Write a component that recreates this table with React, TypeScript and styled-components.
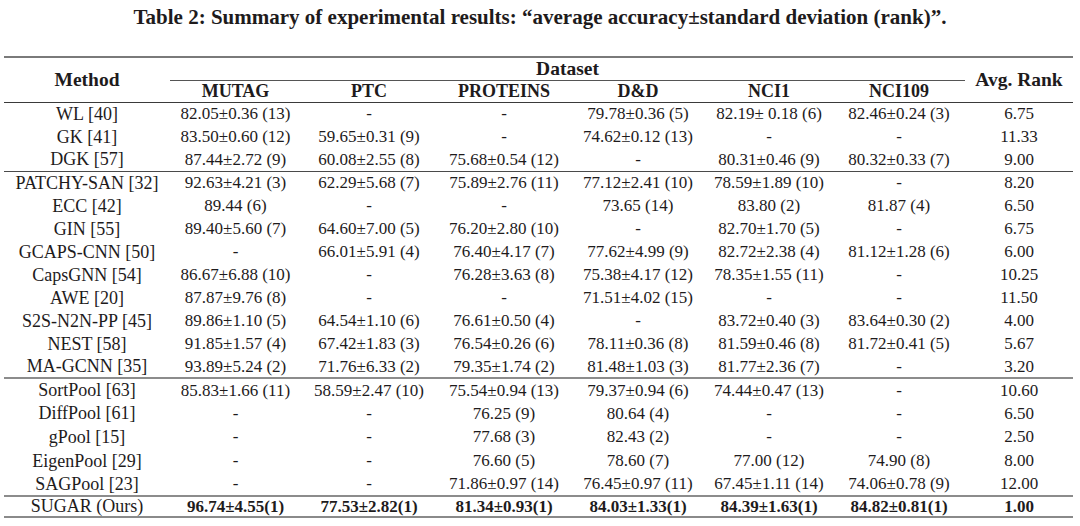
import { FC } from 'react'
import styled, { createGlobalStyle } from 'styled-components'

type Row = [string, string, string, string, string, string, string, string]

const groups: Row[][] = [
  [
    ['WL [40]', '82.05±0.36 (13)', '-', '-', '79.78±0.36 (5)', '82.19± 0.18 (6)', '82.46±0.24 (3)', '6.75'],
    ['GK [41]', '83.50±0.60 (12)', '59.65±0.31 (9)', '-', '74.62±0.12 (13)', '-', '-', '11.33'],
    ['DGK [57]', '87.44±2.72 (9)', '60.08±2.55 (8)', '75.68±0.54 (12)', '-', '80.31±0.46 (9)', '80.32±0.33 (7)', '9.00'],
  ],
  [
    ['PATCHY-SAN [32]', '92.63±4.21 (3)', '62.29±5.68 (7)', '75.89±2.76 (11)', '77.12±2.41 (10)', '78.59±1.89 (10)', '-', '8.20'],
    ['ECC [42]', '89.44 (6)', '-', '-', '73.65 (14)', '83.80 (2)', '81.87 (4)', '6.50'],
    ['GIN [55]', '89.40±5.60 (7)', '64.60±7.00 (5)', '76.20±2.80 (10)', '-', '82.70±1.70 (5)', '-', '6.75'],
    ['GCAPS-CNN [50]', '-', '66.01±5.91 (4)', '76.40±4.17 (7)', '77.62±4.99 (9)', '82.72±2.38 (4)', '81.12±1.28 (6)', '6.00'],
    ['CapsGNN [54]', '86.67±6.88 (10)', '-', '76.28±3.63 (8)', '75.38±4.17 (12)', '78.35±1.55 (11)', '-', '10.25'],
    ['AWE [20]', '87.87±9.76 (8)', '-', '-', '71.51±4.02 (15)', '-', '-', '11.50'],
    ['S2S-N2N-PP [45]', '89.86±1.10 (5)', '64.54±1.10 (6)', '76.61±0.50 (4)', '-', '83.72±0.40 (3)', '83.64±0.30 (2)', '4.00'],
    ['NEST [58]', '91.85±1.57 (4)', '67.42±1.83 (3)', '76.54±0.26 (6)', '78.11±0.36 (8)', '81.59±0.46 (8)', '81.72±0.41 (5)', '5.67'],
    ['MA-GCNN [35]', '93.89±5.24 (2)', '71.76±6.33 (2)', '79.35±1.74 (2)', '81.48±1.03 (3)', '81.77±2.36 (7)', '-', '3.20'],
  ],
  [
    ['SortPool [63]', '85.83±1.66 (11)', '58.59±2.47 (10)', '75.54±0.94 (13)', '79.37±0.94 (6)', '74.44±0.47 (13)', '-', '10.60'],
    ['DiffPool [61]', '-', '-', '76.25 (9)', '80.64 (4)', '-', '-', '6.50'],
    ['gPool [15]', '-', '-', '77.68 (3)', '82.43 (2)', '-', '-', '2.50'],
    ['EigenPool [29]', '-', '-', '76.60 (5)', '78.60 (7)', '77.00 (12)', '74.90 (8)', '8.00'],
    ['SAGPool [23]', '-', '-', '71.86±0.97 (14)', '76.45±0.97 (11)', '67.45±1.11 (14)', '74.06±0.78 (9)', '12.00'],
  ],
]

const ours: Row = ['SUGAR (Ours)', '96.74±4.55(1)', '77.53±2.82(1)', '81.34±0.93(1)', '84.03±1.33(1)', '84.39±1.63(1)', '84.82±0.81(1)', '1.00']

const datasets = ['MUTAG', 'PTC', 'PROTEINS', 'D&D', 'NCI1', 'NCI109']
const widths = [166, 131, 136, 134, 134, 128, 132, 108]

const App: FC = () => {
  return (
    <Page>
      <GlobalStyle />
      <Caption>Table 2: Summary of experimental results: “average accuracy±standard deviation (rank)”.</Caption>
      <ResultsTable>
        <colgroup>
          {widths.map((w, i) => (
            <col key={i} style={{ width: w }} />
          ))}
        </colgroup>
        <Head>
          <HeadRow>
            <HeadCell rowSpan={2} $wide>
              Method
            </HeadCell>
            <HeadCell colSpan={6} $underline $wide>
              Dataset
            </HeadCell>
            <HeadCell rowSpan={2} $wide>
              Avg. Rank
            </HeadCell>
          </HeadRow>
          <HeadRow $short>
            {datasets.map(d => (
              <HeadCell key={d}>{d}</HeadCell>
            ))}
          </HeadRow>
        </Head>
        {groups.map((group, gi) => (
          <Group key={gi} $rule={gi === 0 ? 'none' : gi === 1 ? 'thin' : 'thick'}>
            {group.map(row => (
              <BodyRow key={row[0]} $tall={gi === 2}>
                {row.map((value, ci) => (
                  <Cell key={ci} $name={ci === 0}>
                    {value}
                  </Cell>
                ))}
              </BodyRow>
            ))}
          </Group>
        ))}
        <Group $rule={'thick'}>
          <BodyRow $last>
            {ours.map((value, ci) => (
              <Cell key={ci} $name={ci === 0} $bold={ci > 0}>
                {value}
              </Cell>
            ))}
          </BodyRow>
        </Group>
      </ResultsTable>
    </Page>
  )
}

export default App

const GlobalStyle = createGlobalStyle`
  body {
    margin: 0;
    background: #fff;
  }
`
const Page = styled.div`
  width: 1080px;
  height: 526px;
  overflow: hidden;
  font-family: 'Liberation Serif', 'Times New Roman', serif;
  color: #1e1b1c;
`
const Caption = styled.div`
  height: 56px;
  padding-top: 4px;
  box-sizing: border-box;
  text-align: center;
  font-size: 21px;
  line-height: 26px;
  font-weight: 700;
`
const ResultsTable = styled.table`
  margin-left: 4px;
  width: 1069px;
  table-layout: fixed;
  border-collapse: collapse;
  border-top: 2px solid #7a7a7a;
  border-bottom: 2px solid #8a8a8a;
  font-size: 17px;
`
const Head = styled.thead`
  border-bottom: 1px solid #3a3a3a;
`
const HeadRow = styled.tr<{ $short?: boolean }>`
  height: ${({ $short }) => ($short ? '22px' : '23px')};
`
const HeadCell = styled.th<{ $underline?: boolean; $wide?: boolean }>`
  padding: 0;
  text-align: center;
  vertical-align: middle;
  font-weight: 700;
  font-size: ${({ $wide }) => ($wide ? '19.5px' : '18px')};
  line-height: 1;
  white-space: nowrap;
  border-bottom: ${({ $underline }) => ($underline ? '1px solid #555' : 'none')};
`
const Group = styled.tbody<{ $rule: 'none' | 'thin' | 'thick' }>`
  border-top: ${({ $rule }) =>
    $rule === 'thin' ? '1px solid #4a4a4a' : $rule === 'thick' ? '2px solid #8c8c8c' : 'none'};
`
const BodyRow = styled.tr<{ $last?: boolean; $tall?: boolean }>`
  height: ${({ $last, $tall }) => ($last ? '21px' : $tall ? '23.6px' : '23px')};
`
const Cell = styled.td<{ $bold?: boolean; $name?: boolean }>`
  padding: 0;
  text-align: center;
  vertical-align: middle;
  line-height: 1;
  white-space: nowrap;
  font-size: ${({ $name }) => ($name ? '18px' : '17px')};
  font-weight: ${({ $bold }) => ($bold ? 700 : 400)};
`
